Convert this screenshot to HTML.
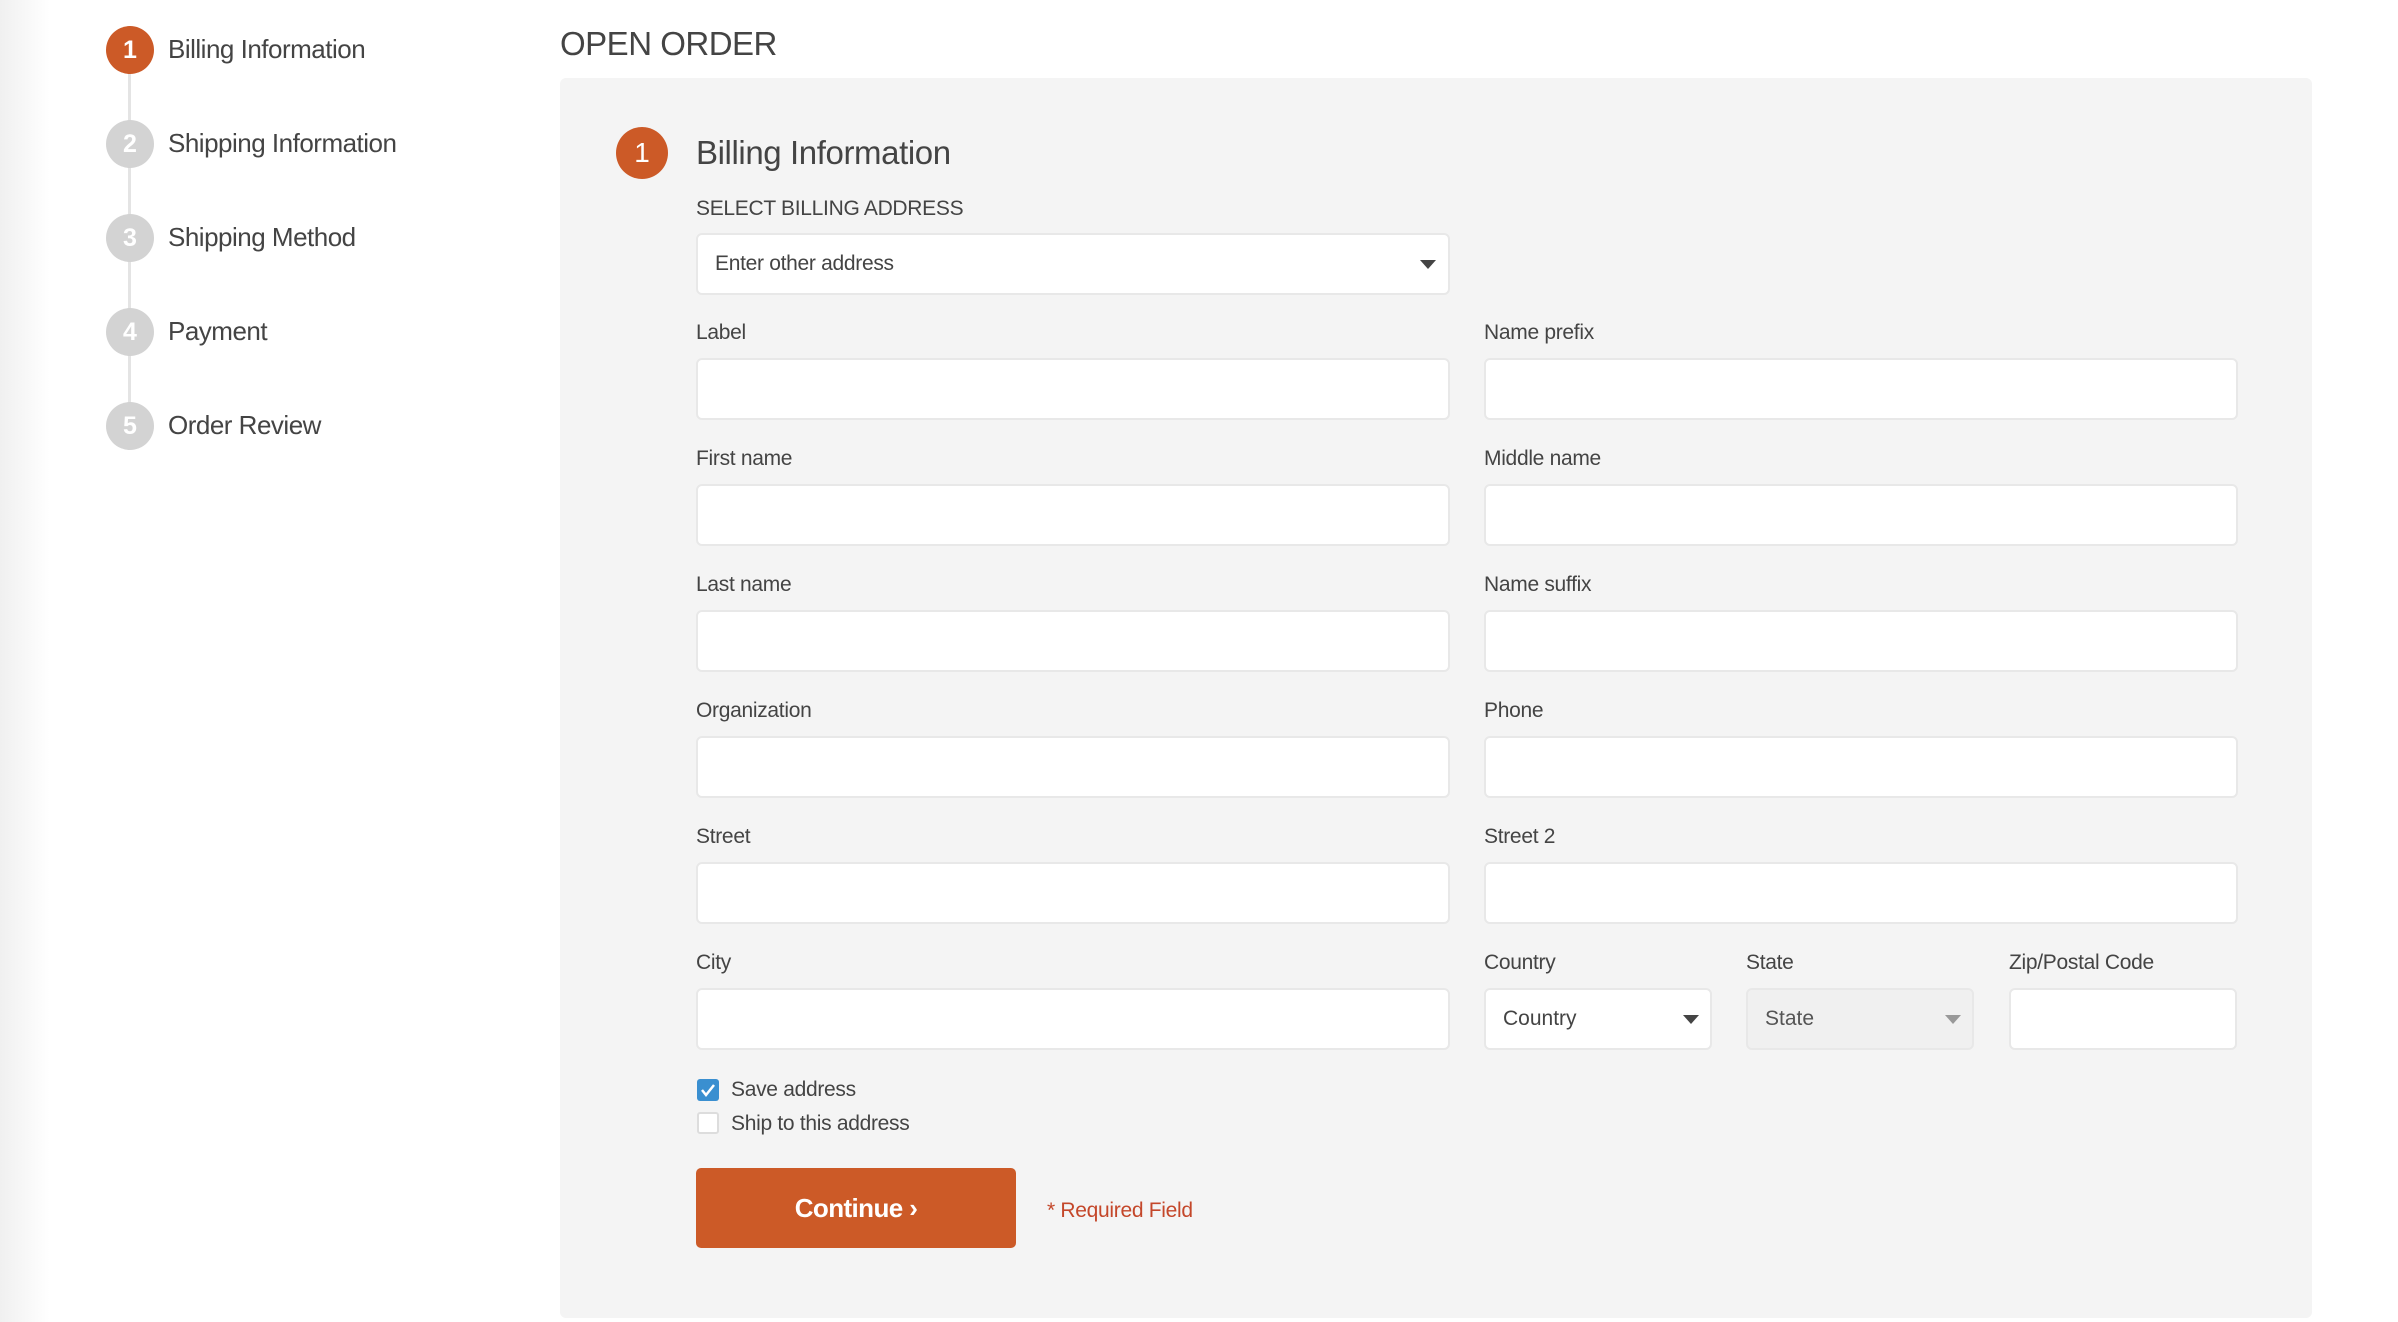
<!DOCTYPE html>
<html><head><meta charset="utf-8"><style>
*{box-sizing:border-box;margin:0;padding:0}
body{width:2398px;height:1322px;overflow:hidden;background:#fff;font-family:"Liberation Sans",sans-serif;color:#444;position:relative}
.lg{position:absolute;left:0;top:0;width:50px;height:1322px;background:linear-gradient(to right,#f0f0f0,#fff)}
.a{position:absolute;white-space:nowrap}
.c{position:absolute;border-radius:50%;color:#fff;font-weight:bold;text-align:center}
.s{width:48px;height:48px;line-height:48px;font-size:25px;left:106px;background:#d3d3d3}
.sl{position:absolute;left:168px;font-size:26px;line-height:30px;color:#444;letter-spacing:-0.5px}
.panel{position:absolute;left:560px;top:78px;width:1752px;height:1240px;background:#f4f4f4;border-radius:6px}
.lab{position:absolute;font-size:21px;line-height:24px;color:#444;letter-spacing:-0.3px}
.in{position:absolute;height:62px;background:#fff;border:2px solid #e8e8e8;border-radius:6px}
.tri{position:absolute;width:0;height:0;border-left:8px solid transparent;border-right:8px solid transparent;border-top:9px solid #444}
</style></head><body>
<div class="lg"></div>
<div style="position:absolute;left:128px;top:50px;width:3px;height:374px;background:#e4e4e4"></div>
<div class="c s" style="top:26px;background:#cc5a27">1</div>
<div class="c s" style="top:120px">2</div>
<div class="c s" style="top:214px">3</div>
<div class="c s" style="top:308px">4</div>
<div class="c s" style="top:402px">5</div>
<div class="sl" style="top:34px">Billing Information</div>
<div class="sl" style="top:128px">Shipping Information</div>
<div class="sl" style="top:222px">Shipping Method</div>
<div class="sl" style="top:316px">Payment</div>
<div class="sl" style="top:410px">Order Review</div>

<div class="a" style="left:560px;top:26px;font-size:33px;line-height:36px;color:#444;letter-spacing:-0.5px">OPEN ORDER</div>
<div class="panel"></div>
<div class="c" style="left:616px;top:127px;width:52px;height:52px;line-height:52px;font-size:28px;font-weight:normal;background:#cc5a27">1</div>
<div class="a" style="left:696px;top:134px;font-size:33px;line-height:38px;color:#444;letter-spacing:-0.4px">Billing Information</div>
<div class="a" style="left:696px;top:197px;font-size:21px;line-height:24px;letter-spacing:-0.3px">SELECT BILLING ADDRESS</div>
<div class="in" style="left:696px;top:233px;width:754px;height:62px"></div>
<div class="a" style="left:715px;top:252px;font-size:21px;line-height:24px;letter-spacing:-0.3px">Enter other address</div>
<div class="tri" style="left:1420px;top:260px"></div>

<div class="lab" style="left:696px;top:321px">Label</div><div class="lab" style="left:1484px;top:321px">Name prefix</div>
<div class="in" style="left:696px;top:358px;width:754px"></div><div class="in" style="left:1484px;top:358px;width:754px"></div>
<div class="lab" style="left:696px;top:447px">First name</div><div class="lab" style="left:1484px;top:447px">Middle name</div>
<div class="in" style="left:696px;top:484px;width:754px"></div><div class="in" style="left:1484px;top:484px;width:754px"></div>
<div class="lab" style="left:696px;top:573px">Last name</div><div class="lab" style="left:1484px;top:573px">Name suffix</div>
<div class="in" style="left:696px;top:610px;width:754px"></div><div class="in" style="left:1484px;top:610px;width:754px"></div>
<div class="lab" style="left:696px;top:699px">Organization</div><div class="lab" style="left:1484px;top:699px">Phone</div>
<div class="in" style="left:696px;top:736px;width:754px"></div><div class="in" style="left:1484px;top:736px;width:754px"></div>
<div class="lab" style="left:696px;top:825px">Street</div><div class="lab" style="left:1484px;top:825px">Street 2</div>
<div class="in" style="left:696px;top:862px;width:754px"></div><div class="in" style="left:1484px;top:862px;width:754px"></div>
<div class="lab" style="left:696px;top:951px">City</div><div class="lab" style="left:1484px;top:951px">Country</div>
<div class="lab" style="left:1746px;top:951px">State</div><div class="lab" style="left:2009px;top:951px">Zip/Postal Code</div>
<div class="in" style="left:696px;top:988px;width:754px"></div>
<div class="in" style="left:1484px;top:988px;width:228px"></div>
<div class="a" style="left:1503px;top:1007px;font-size:21px;line-height:24px">Country</div>
<div class="tri" style="left:1683px;top:1015px"></div>
<div class="in" style="left:1746px;top:988px;width:228px;background:#f0f0f0"></div>
<div class="a" style="left:1765px;top:1007px;font-size:21px;line-height:24px;color:#555">State</div>
<div class="tri" style="left:1945px;top:1015px;border-top-color:#999"></div>
<div class="in" style="left:2009px;top:988px;width:228px"></div>

<div style="position:absolute;left:697px;top:1079px;width:22px;height:22px;background:#3a8fd0;border-radius:3px"></div>
<svg style="position:absolute;left:697px;top:1079px" width="22" height="22"><path d="M5 11 L9 16 L17 6" stroke="#fff" stroke-width="2.5" fill="none"/></svg>
<div class="a" style="left:731px;top:1078px;font-size:21px;line-height:24px;letter-spacing:-0.3px">Save address</div>
<div style="position:absolute;left:697px;top:1112px;width:22px;height:22px;background:#fff;border:2px solid #ddd;border-radius:3px"></div>
<div class="a" style="left:731px;top:1112px;font-size:21px;line-height:24px;letter-spacing:-0.3px">Ship to this address</div>

<div style="position:absolute;left:696px;top:1168px;width:320px;height:80px;background:#cc5a27;border-radius:5px;color:#fff;font-weight:bold;font-size:26px;line-height:80px;text-align:center;letter-spacing:-0.6px">Continue ›</div>
<div class="a" style="left:1047px;top:1199px;font-size:21px;line-height:24px;color:#c4472a;letter-spacing:-0.3px">* Required Field</div>
</body></html>
